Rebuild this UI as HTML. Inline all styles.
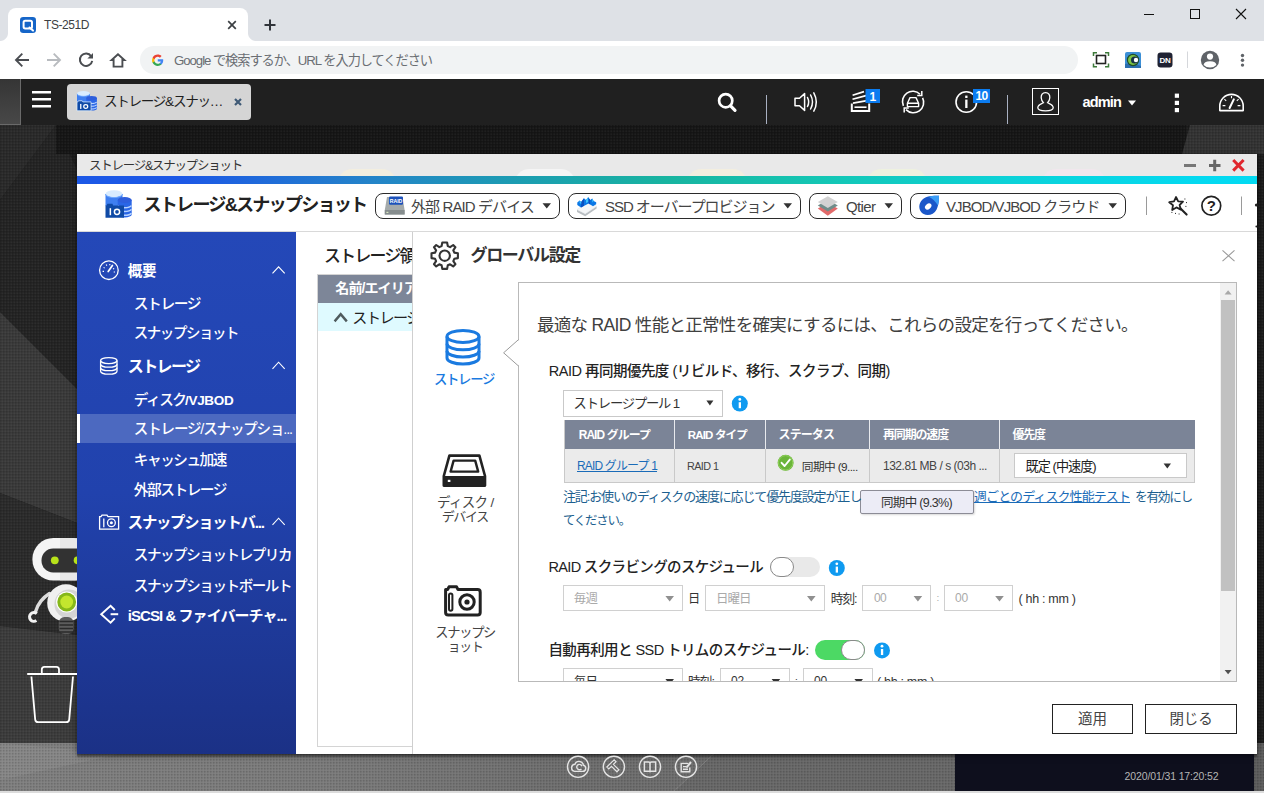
<!DOCTYPE html>
<html lang="ja">
<head>
<meta charset="utf-8">
<title>TS-251D</title>
<style>
*{box-sizing:border-box;margin:0;padding:0}
html,body{width:1264px;height:793px;overflow:hidden;background:#222}
body{position:relative;font-family:"Liberation Sans","Noto Sans CJK JP",sans-serif;color:#222;font-size:14px}
.abs{position:absolute}
svg{display:block;position:absolute;overflow:visible}
.nw{white-space:nowrap}

/* ---------- browser chrome ---------- */
#tabstrip{left:0;top:0;width:1264px;height:41px;background:#dee1e6}
#tab{left:8px;top:8px;width:240px;height:34px;background:#fff;border-radius:8px 8px 0 0}
#tab:before,#tab:after{content:"";position:absolute;bottom:1px;width:8px;height:8px;background:radial-gradient(circle at 0 0,rgba(255,255,255,0) 7.5px,#fff 8.5px)}
#tab:before{left:-8px}
#tab:after{right:-8px;background:radial-gradient(circle at 100% 0,rgba(255,255,255,0) 7.5px,#fff 8.5px)}
#tabtitle{left:44px;top:18px;font-size:12px;color:#3c4043;line-height:14px}
#toolbar{left:0;top:41px;width:1264px;height:38px;background:#fff}
#omni{left:140px;top:46px;width:938px;height:28px;border-radius:14px;background:#f1f3f4}
#omnitext{left:174px;top:51px;font-size:14px;line-height:18px;color:#6b6f73}

/* ---------- QTS top bar ---------- */
#qbar{left:0;top:79px;width:1264px;height:46px;background:#202020}
#qbarL{left:0;top:79px;width:21px;height:46px;background:linear-gradient(#353535,#484848);border-right:1px solid #6a6a6a;border-bottom:1px solid #6a6a6a}
#qtab{left:67px;top:84px;width:184px;height:36px;border-radius:4px;background:#d5d5d5}
#qtabtext{left:104px;top:92px;font-size:14px;line-height:20px;color:#222}
.qsep{width:1px;background:#a9b1c2;top:95px;height:29px}
#admin{left:1082px;top:92px;font-size:15px;line-height:20px;color:#fff;font-weight:bold;letter-spacing:-0.2px}

/* ---------- desktop ---------- */
#desk{left:0;top:125px;width:1264px;height:668px;background:#1d1d1d;overflow:hidden}
#datebox{left:955px;top:754px;width:299px;height:37px;background:#0e0f1d}
#date{left:1124px;top:770px;font-size:10.5px;line-height:14px;color:#b9b9b9}

/* ---------- app window ---------- */
#win{left:77px;top:154px;width:1180px;height:600px;background:#fff;box-shadow:0 1px 6px rgba(0,0,0,.5)}
#wtitle{left:0;top:0;width:1180px;height:22px;background:#e9e9e9}
#wtitletext{left:12px;top:3px;font-size:13px;line-height:18px;color:#333}
#wgrad{left:0;top:22px;width:1180px;height:8px;background:linear-gradient(90deg,#1c58e6 0%,#1c58e6 9%,#2484c8 25%,#1c9cb2 37%,#18b4a0 50%,#14c6b4 63%,#0cd2d8 79%,#04d9f0 95%,#02daf2 100%)}
#wtool{left:0;top:30px;width:1180px;height:48px;background:#fff;border-bottom:1px solid #d9d9d9}
#apptitle{left:65px;top:39px;font-size:19px;line-height:26px;color:#222;font-weight:bold;letter-spacing:-0.3px}
.pill{top:39px;height:26px;border:1px solid #333;border-radius:8px;background:#fff;font-size:15px;line-height:24px;color:#333}
.pill span{position:absolute;top:0;white-space:nowrap}
.pill i{position:absolute;top:10px;width:0;height:0;border-left:4px solid transparent;border-right:4px solid transparent;border-top:6px solid #333}

/* sidebar */
#side{left:0;top:78px;width:219px;height:522px;background:linear-gradient(#2448b8 0%,#2142ad 50%,#1b3186 100%)}
.sh{left:51px;font-size:16px;line-height:22px;font-weight:bold;color:#fff;white-space:nowrap;letter-spacing:-0.4px}
.si{left:58px;font-size:15px;line-height:20px;color:#fff;white-space:nowrap;letter-spacing:-0.3px}
#sel{left:0;top:260px;width:219px;height:29px;background:#4a67bf;border-left:3px solid #fff}

/* list behind dialog */
#listtitle{left:247px;top:91px;font-size:19px;line-height:26px;color:#222;white-space:nowrap;width:90px;overflow:hidden}
#listbox{left:240px;top:119px;width:100px;height:474px;border:1px solid #d6d6d6;border-right:0;background:#fff}
#listhead{left:241px;top:120px;width:95px;height:28px;background:#7d8799;color:#fff;font-size:14px;line-height:28px;padding-left:17px;white-space:nowrap;overflow:hidden}
#listrow{left:241px;top:148px;width:95px;height:32px;background:#dffbff;font-size:15px;line-height:32px;white-space:nowrap;overflow:hidden;color:#222}

/* dialog */
#dlg{left:335px;top:78px;width:845px;height:522px;background:#fff;border-left:1px solid #cfcfcf}
#dlgtitle{left:56px;top:11px;font-size:17px;line-height:26px;font-weight:bold;color:#333;white-space:nowrap;letter-spacing:-0.3px}
#panel{left:105px;top:50px;width:720px;height:401px;border:1px solid #bdbdbd;background:#fff;overflow:hidden}
.btn{top:472px;height:30px;border:1px solid #222;background:#fff;font-size:15px;line-height:28px;text-align:center;color:#333}
.navl{font-size:13px;line-height:14px;color:#333;text-align:center;width:90px;left:7px}

.pillb{top:193px;height:26px;border:1px solid #2b2b2b;border-radius:8px;background:#fff}
.vs{top:420px;width:1px;height:29px;background:#e8eaee}
.vh{top:449px;width:1px;height:33px;background:#c9c9c9}
.tog{width:50px;height:20px;border-radius:10px}
.knob{width:24px;height:20px;border-radius:10px;background:#fff;border:1.5px solid #8a8a8a}
.selb{height:26px;border:1px solid #d0d0d0;background:#fff}
</style>
</head>
<body>

<!-- ======= Browser chrome ======= -->
<div id="tabstrip" class="abs"></div>
<div id="tab" class="abs"></div>
<div id="toolbar" class="abs"></div>
<div id="omni" class="abs"></div>


<!-- chrome icons -->
<svg class="abs" style="left:0;top:0" width="1264" height="78" viewBox="0 0 1264 78">
  <!-- favicon -->
  <rect x="20" y="17" width="16" height="16" rx="3.2" fill="#1565c8"/>
  <rect x="23.6" y="20.8" width="8.4" height="7.6" rx="1.6" fill="none" stroke="#fff" stroke-width="2"/>
  <path d="M29.5 27.5 L33 30.6" stroke="#fff" stroke-width="2" stroke-linecap="round"/>
  <!-- tab close -->
  <path d="M228.2 21.2 L235.8 28.8 M235.8 21.2 L228.2 28.8" stroke="#3c4043" stroke-width="1.7"/>
  <!-- new tab -->
  <path d="M264.5 25 H275.5 M270 19.5 V30.5" stroke="#30343a" stroke-width="2"/>
  <!-- window controls -->
  <path d="M1144 14.5 H1154" stroke="#111" stroke-width="1"/>
  <rect x="1190.5" y="9.5" width="9" height="9" fill="none" stroke="#111" stroke-width="1"/>
  <path d="M1236 9 L1246 19 M1246 9 L1236 19" stroke="#111" stroke-width="1.1"/>
  <!-- back -->
  <path d="M29 60 H16.5 M22.3 53.7 L16 60 L22.3 66.3" fill="none" stroke="#4a4d51" stroke-width="1.9"/>
  <!-- forward -->
  <path d="M47 60 H59.5 M53.7 53.7 L60 60 L53.7 66.3" fill="none" stroke="#b8bbbf" stroke-width="1.9"/>
  <!-- reload -->
  <path d="M91.2 56.2 A6.2 6.2 0 1 0 92.2 60.8" fill="none" stroke="#4a4d51" stroke-width="2"/>
  <path d="M93 53 V58.6 H87.4 Z" fill="#4a4d51"/>
  <!-- home -->
  <path d="M118 54.2 L111.6 60 H113.6 V66.6 H122.4 V60 H124.4 Z" fill="none" stroke="#4a4d51" stroke-width="1.9" stroke-linejoin="miter"/>
  <!-- Google G -->
  <g transform="translate(151.5,54) scale(0.26)">
    <path fill="#4285F4" d="M45.12 24.5c0-1.56-.14-3.06-.4-4.5H24v8.51h11.84c-.51 2.75-2.06 5.08-4.39 6.64v5.52h7.11c4.16-3.83 6.56-9.47 6.56-16.17z"/>
    <path fill="#34A853" d="M24 46c5.94 0 10.92-1.97 14.56-5.33l-7.11-5.52c-1.97 1.32-4.49 2.1-7.45 2.1-5.73 0-10.58-3.87-12.31-9.07H4.34v5.7C7.96 41.07 15.4 46 24 46z"/>
    <path fill="#FBBC05" d="M11.69 28.18C11.25 26.86 11 25.45 11 24s.25-2.86.69-4.18v-5.7H4.34C2.85 17.09 2 20.45 2 24c0 3.55.85 6.91 2.34 9.88l7.35-5.7z"/>
    <path fill="#EA4335" d="M24 10.75c3.23 0 6.13 1.11 8.41 3.29l6.31-6.31C34.91 4.18 29.93 2 24 2 15.4 2 7.96 6.93 4.34 14.12l7.35 5.7c1.73-5.2 6.58-9.07 12.31-9.07z"/>
  </g>
  <!-- screenshot ext -->
  <rect x="1096.5" y="55.5" width="9" height="8" fill="none" stroke="#222" stroke-width="1.6"/>
  <path d="M1093.5 56 V52.7 H1097 M1105 52.7 H1108.5 V56 M1093.5 63.5 V66.7 H1097 M1105 66.7 H1108.5 V63.5" fill="none" stroke="#3d7a3a" stroke-width="1.5"/>
  <!-- ext 2 -->
  <rect x="1125" y="52" width="16" height="16" rx="2" fill="#3c8fd6"/>
  <path d="M1125 64 Q1133 62 1141 66 V68 H1125 Z" fill="#2b6fb0"/>
  <circle cx="1133" cy="60" r="6.2" fill="#1e4d2b"/>
  <circle cx="1133" cy="60" r="5" fill="#7cc243"/>
  <circle cx="1134.6" cy="60" r="3.6" fill="#16324a"/>
  <circle cx="1136" cy="60" r="2.2" fill="#fff"/>
  <!-- DN -->
  <rect x="1157.5" y="52.5" width="15" height="15" rx="3.2" fill="#1f2233"/>
  <text x="1165" y="63.2" font-family="Liberation Sans, sans-serif" font-size="8" font-weight="bold" fill="#fff" text-anchor="middle" letter-spacing="-0.3">DN</text>
  <!-- divider -->
  <path d="M1187.5 51.5 V68" stroke="#d5d7db" stroke-width="1"/>
  <!-- profile -->
  <circle cx="1210" cy="60" r="9.2" fill="#5f6368"/>
  <circle cx="1210" cy="56.6" r="3.1" fill="#fff"/>
  <path d="M1203.6 65.1 Q1203.8 61.4 1210 61.2 Q1216.2 61.4 1216.4 65.1 Q1213.8 67.6 1210 67.6 Q1206.2 67.6 1203.6 65.1 Z" fill="#fff"/>
  <!-- menu -->
  <circle cx="1242.5" cy="55.5" r="1.7" fill="#5f6368"/><circle cx="1242.5" cy="60.3" r="1.7" fill="#5f6368"/><circle cx="1242.5" cy="65.1" r="1.7" fill="#5f6368"/>
</svg>

<!-- ======= QTS bar ======= -->
<div id="qbar" class="abs"></div>
<div id="qbarL" class="abs"></div>
<div id="qtab" class="abs"></div>
<div class="abs qsep" style="left:766px"></div>
<div class="abs qsep" style="left:1007px"></div>


<svg class="abs" style="left:0;top:78px" width="1264" height="47" viewBox="0 78 1264 47">
  <!-- hamburger -->
  <path d="M32 92.2 H51 M32 99.2 H51 M32 106.2 H51" stroke="#fff" stroke-width="2.4"/>
  <!-- storage icon in tab -->
  <g transform="translate(77 90.9) scale(0.76 0.715) translate(-105.5 -190)">
    <path d="M105.5 194 V206 H122.5 V194 Z" fill="#3f7ff0"/>
    <ellipse cx="114" cy="193.8" rx="8.5" ry="3.6" fill="#d9ecff"/>
    <path d="M105.5 194 A8.5 3.6 0 0 0 122.5 194" fill="none" stroke="#6fa8ff" stroke-width="1"/>
    <path d="M117.7 200 V214.5 A7 3 0 0 0 131.7 214.5 V200 Z" fill="#2a66e6"/>
    <ellipse cx="124.7" cy="200" rx="7" ry="3" fill="#2e5edc"/>
    <path d="M118 205.6 A7 3 0 0 0 131.4 205.6 M118 209.4 A7 3 0 0 0 131.4 209.4 M118 213.2 A7 3 0 0 0 131.4 213.2" fill="none" stroke="#b7d3ff" stroke-width="1.5"/>
    <path d="M105.5 205.4 H106.6 L107.4 203.8 H112.4 L113.2 205.4 H124 V217.8 H105.5 Z" fill="#0f4aa6" stroke="#dff0ff" stroke-width="1"/>
    <rect x="109.6" y="208.2" width="1.7" height="7" fill="#fff"/>
    <circle cx="117" cy="211.8" r="2.6" fill="none" stroke="#fff" stroke-width="1.7"/>
  </g>
  <!-- tab close -->
  <path d="M235 99 L241 105 M241 99 L235 105" stroke="#3f5a76" stroke-width="2.2"/>
  <!-- search -->
  <circle cx="725.7" cy="100.7" r="6.6" fill="none" stroke="#fff" stroke-width="2.7"/>
  <path d="M730.6 105.8 L735 110.4" stroke="#fff" stroke-width="3.2" stroke-linecap="round"/>
  <!-- volume -->
  <path d="M795 98.2 H799.5 L804.6 93.6 V110.4 L799.5 105.8 H795 Z" fill="none" stroke="#fff" stroke-width="1.5" stroke-linejoin="round"/>
  <path d="M807.5 97.5 Q809.8 102 807.5 106.5 M810.6 95 Q814.4 102 810.6 109 M813.8 92.8 Q818.8 102 813.8 111.2" fill="none" stroke="#fff" stroke-width="1.5" stroke-linecap="round"/>
  <!-- tasks -->
  <path d="M851.8 103.5 V111 H869.2 V103.5" fill="none" stroke="#fff" stroke-width="2"/>
  <path d="M854.5 107.2 H866.5" stroke="#fff" stroke-width="1.6"/>
  <path d="M853 103.2 L867 100.6 M852.5 99.2 L866 95.6 M852.6 95.2 L864 91.6" stroke="#fff" stroke-width="1.7"/>
  <rect x="865.5" y="89" width="14.5" height="14" fill="#0b7cf0"/>
  <text x="872.8" y="100.6" font-family="Liberation Sans, sans-serif" font-size="12" font-weight="bold" fill="#fff" text-anchor="middle">1</text>
  <!-- sync / backup -->
  <path d="M903.4 105.8 A10.3 10.3 0 0 1 920 94.2" fill="none" stroke="#fff" stroke-width="1.6"/>
  <path d="M922.6 97.8 A10.3 10.3 0 0 1 906 109.6" fill="none" stroke="#fff" stroke-width="1.6"/>
  <path d="M921.8 91 V95.6 H917.2" fill="none" stroke="#fff" stroke-width="1.5"/>
  <path d="M904.2 112.6 V108 H908.8" fill="none" stroke="#fff" stroke-width="1.5"/>
  <path d="M910 97.6 H916 L918.6 103.2 V106.6 H907.4 V103.2 Z M907.4 103.2 H918.6" fill="none" stroke="#fff" stroke-width="1.4" stroke-linejoin="round"/>
  <!-- info -->
  <circle cx="966.3" cy="102" r="10.3" fill="none" stroke="#fff" stroke-width="1.6"/>
  <rect x="965.2" y="99.6" width="2.3" height="8.4" fill="#fff"/><rect x="965.2" y="95.6" width="2.3" height="2.4" fill="#fff"/>
  <rect x="973" y="89" width="17" height="14" fill="#0b7cf0"/>
  <text x="981.5" y="100.4" font-family="Liberation Sans, sans-serif" font-size="12" font-weight="bold" fill="#fff" text-anchor="middle" letter-spacing="-0.6">10</text>
  <!-- user -->
  <rect x="1032.5" y="88.5" width="26" height="26" fill="none" stroke="#fff" stroke-width="1"/>
  <path d="M1045.5 92.6 C1042.4 92.6 1041 95 1041.2 97.8 C1041.4 100.6 1042.6 102 1043.4 102.8 C1041.4 104 1037.8 104.4 1037.8 107.8 C1037.8 110.4 1041 110.8 1045.5 110.8 C1050 110.8 1053.2 110.4 1053.2 107.8 C1053.2 104.4 1049.6 104 1047.6 102.8 C1048.4 102 1049.6 100.6 1049.8 97.8 C1050 95 1048.6 92.6 1045.5 92.6 Z" fill="none" stroke="#fff" stroke-width="1.3"/>
  <path d="M1128 100.6 H1136 L1132 105.6 Z" fill="#fff"/>
  <!-- more dots -->
  <rect x="1174.8" y="93.6" width="4.2" height="4.2" fill="#fff"/><rect x="1174.8" y="100.8" width="4.2" height="4.2" fill="#fff"/><rect x="1174.8" y="108" width="4.2" height="4.2" fill="#fff"/>
  <!-- gauge -->
  <path d="M1219.8 110.6 V106 A11.7 11.7 0 0 1 1243.2 106 V110.6 Z" fill="none" stroke="#fff" stroke-width="1.6" stroke-linejoin="round"/>
  <path d="M1229.6 108 L1233.8 99.4" stroke="#fff" stroke-width="2" stroke-linecap="round"/>
  <path d="M1222.6 105.6 H1225.4 M1237.6 105.6 H1240.4 M1224.4 99.2 L1226.2 100.8 M1238.6 99.2 L1236.8 100.8 M1231.5 96 V98.2" stroke="#fff" stroke-width="1.1"/>
</svg>

<!-- ======= Desktop ======= -->
<div id="desk" class="abs">
<svg width="1264" height="668" viewBox="0 125 1264 668" style="left:0;top:0">
  <defs>
    <pattern id="dots" width="3" height="3" patternUnits="userSpaceOnUse">
      <rect x="0" y="0" width="1.5" height="1.5" fill="#000" opacity=".14"/>
      <rect x="1.5" y="1.5" width="1.5" height="1.5" fill="#fff" opacity=".04"/>
    </pattern>
    <linearGradient id="bg2" x1="0" y1="0" x2="1" y2="0"><stop offset="0" stop-color="#7f7f7f"/><stop offset=".25" stop-color="#7b7b7b"/><stop offset=".45" stop-color="#6e6e6e"/><stop offset="1" stop-color="#6a6a6a"/></linearGradient>
    <linearGradient id="sh" x1="0" y1="0" x2="0" y2="1"><stop offset="0" stop-color="#000" stop-opacity=".45"/><stop offset="1" stop-color="#000" stop-opacity="0"/></linearGradient>
    <linearGradient id="dg1" x1="0" y1="0" x2="0" y2="1"><stop offset="0" stop-color="#151515"/><stop offset="1" stop-color="#222"/></linearGradient>
  </defs>
  <rect x="0" y="125" width="1264" height="668" fill="#1b1b1b"/>
  <!-- top-left lighter wedge -->
  <polygon points="0,125 56,125 0,200" fill="#2a2a2a"/>
  <polygon points="0,200 56,125 77,170 77,389 0,312" fill="#242424"/>
  <polygon points="0,312 77,389 77,523 0,493" fill="#3a3a3a"/>
  <polygon points="0,493 77,523 77,635 0,626" fill="#2b2b2b"/>
  <polygon points="0,626 77,635 77,743 0,743" fill="#3c3c3c"/>
  <!-- top strip -->
  <rect x="56" y="125" width="1130" height="29" fill="#161616"/>
  <polygon points="1190,125 1264,125 1264,793 1257,793 1257,154 1182,154" fill="#333"/>
  <rect x="1257" y="154" width="7" height="600" fill="#1c1c1c"/>
  <!-- bottom strip -->
  <rect x="0" y="743" width="1264" height="50" fill="url(#bg2)"/>
  <polygon points="0,780 120,754 0,743" fill="#868686"/>
  <polygon points="672,793 720,748 955,748 955,793" fill="#686868"/>
  <path d="M672 793 L720 748" stroke="#808080" stroke-width="1"/>
  <rect x="1254" y="743" width="10" height="50" fill="#5c5c5c"/>
  <rect x="77" y="754" width="1180" height="4" fill="url(#sh)"/>
  <rect x="0" y="125" width="1264" height="668" fill="url(#dots)"/>
  <rect x="0" y="791" width="1264" height="2" fill="#dcdcdc"/>
</svg>
</div>
<div id="datebox" class="abs"></div>

<!-- ======= App window ======= -->
<div id="win" class="abs">
  <div id="wtitle" class="abs"></div>
  <div id="wgrad" class="abs"></div>
  <div id="wtool" class="abs"></div>

  <div id="side" class="abs"></div>


  <div id="dlg" class="abs">
  </div>
</div>

<!-- ======= generated layer (page coordinates) ======= -->
<div id="gen" class="abs" style="left:0;top:0;width:1264px;height:793px">

<!-- desktop robot + trash (clipped by window edge) -->
<svg width="77" height="793" viewBox="0 0 77 793" style="left:0;top:0;overflow:hidden">
  <!-- robot -->
  <path d="M49.5 593.5 Q39 600 35.6 611.5" fill="none" stroke="#dcdcdc" stroke-width="3.4" stroke-linecap="round"/>
  <path d="M36.4 620.6 A4.4 4.4 0 1 1 36.8 613.6" fill="none" stroke="#f2f2f2" stroke-width="3"/>
  <circle cx="66" cy="603" r="18.8" fill="#f0f0f0"/>
  <circle cx="69" cy="604" r="14.6" fill="#d4d4d4"/>
  <circle cx="66.7" cy="602" r="10.6" fill="#fff"/>
  <circle cx="66.7" cy="602" r="9.4" fill="#86b81a"/>
  <circle cx="66.7" cy="602" r="6.4" fill="#c3e62e"/>
  <rect x="58.8" y="617" width="14.8" height="17" rx="5.6" fill="#5c5c5c"/>
  <path d="M59.5 621.5 H73 M59.5 625 H73 M59.5 628.5 H73 M59.5 632 H73" stroke="#2a2a2a" stroke-width="1.3"/>
  <rect x="32.4" y="538" width="62" height="42.6" rx="21" fill="#f4f4f4"/>
  <rect x="60" y="538" width="17" height="42.6" fill="#dedede" opacity=".55"/>
  <rect x="41.5" y="548.6" width="52" height="23.8" rx="11.6" fill="#323232"/>
  <circle cx="54.8" cy="560.3" r="3.9" fill="#b8e21a"/>
  <circle cx="77.6" cy="560.3" r="3.9" fill="#b8e21a"/>
  <!-- trash -->
  <path d="M31.4 676.5 L35.2 719.6 Q35.5 722.2 38.2 722.2 H66.2 Q68.9 722.2 69.2 719.6 L73 676.5" fill="none" stroke="#fff" stroke-width="1.8"/>
  <path d="M28 674 H76.5" stroke="#fff" stroke-width="2.2" stroke-linecap="round"/>
  <path d="M41.8 673.6 V669.4 Q41.8 666.8 44.4 666.8 H56.4 Q59 666.8 59 669.4 V673.6" fill="none" stroke="#fff" stroke-width="1.8"/>
</svg>

<!-- faint desktop icons showing through translucent title bar -->
<svg width="1180" height="22" viewBox="77 154 1180 22" style="left:77px;top:154px;overflow:hidden">
  <rect x="338" y="169" width="58" height="30" rx="14" fill="#f5efdc" opacity=".8"/>
  <rect x="515" y="169" width="60" height="30" rx="14" fill="#f7f7f7" opacity=".85"/>
  <rect x="687" y="169" width="60" height="30" rx="14" fill="#f5efdc" opacity=".8"/>
  <rect x="867" y="169" width="60" height="30" rx="14" fill="#eff3dc" opacity=".8"/>
  <rect x="1042" y="169" width="64" height="30" rx="14" fill="#f3e6ee" opacity=".8"/>
</svg>
<!-- boxes -->
<div class="abs" style="left:77px;top:414px;width:219px;height:29px;background:#4c69c0;border-left:3px solid #fff"></div>
<div class="abs pillb" style="left:375px;width:185px"></div>
<div class="abs pillb" style="left:568px;width:233px"></div>
<div class="abs pillb" style="left:809px;width:93px"></div>
<div class="abs pillb" style="left:910px;width:216px"></div>

<!-- list behind dialog -->
<div class="abs" style="left:317px;top:274px;width:95px;height:473px;border:1px solid #d4d4d4;border-right:0;background:#fff"></div>
<div class="abs" style="left:318px;top:275px;width:94px;height:28px;background:#7d8698"></div>
<div class="abs" style="left:318px;top:303px;width:94px;height:28px;background:#dffaff"></div>

<!-- dialog: panel etc -->
<div class="abs" style="left:518px;top:282px;width:719px;height:400px;border:1px solid #b9b9b9;background:#fff"></div>
<!-- scrollbar -->
<div class="abs" style="left:1220px;top:283px;width:16px;height:398px;background:#f1f1f1"></div>
<div class="abs" style="left:1221px;top:300px;width:14px;height:291px;background:#c1c1c1"></div>
<!-- select pool -->
<div class="abs" style="left:563px;top:390px;width:160px;height:27px;border:1px solid #c9c9c9;background:#fff"></div>
<!-- table -->
<div class="abs" style="left:564px;top:420px;width:631px;height:63px;background:#ebebeb;border:1px solid #c9c9c9;border-top:0"></div>
<div class="abs" style="left:565px;top:420px;width:630px;height:29px;background:#7b8497"></div>
<div class="abs vs" style="left:674px"></div><div class="abs vs" style="left:765px"></div><div class="abs vs" style="left:869px"></div><div class="abs vs" style="left:999px"></div>
<div class="abs vh" style="left:674px"></div><div class="abs vh" style="left:765px"></div><div class="abs vh" style="left:869px"></div><div class="abs vh" style="left:999px"></div>
<div class="abs" style="left:1014px;top:453px;width:173px;height:25px;border:1px solid #c9c9c9;background:#fff"></div>
<!-- tooltip -->
<div class="abs" style="left:860px;top:490px;width:114px;height:24px;border:1px solid #8c8c96;background:#ececf6;border-radius:2px;box-shadow:1px 1px 2px rgba(0,0,0,.15)"></div>
<!-- scrub row -->
<div class="abs tog" style="left:770px;top:557px;background:#e9e9e9"></div>
<div class="abs knob" style="left:770px;top:557px"></div>
<div class="abs selb" style="left:563px;top:585px;width:120px"></div>
<div class="abs selb" style="left:705px;top:585px;width:120px"></div>
<div class="abs selb" style="left:862px;top:585px;width:69px"></div>
<div class="abs selb" style="left:944px;top:585px;width:69px"></div>
<!-- trim row -->
<div class="abs tog" style="left:815px;top:640px;background:#4cd964"></div>
<div class="abs knob" style="left:841px;top:640px"></div>
<div class="abs selb" style="left:563px;top:668px;width:120px"></div>
<div class="abs selb" style="left:720px;top:668px;width:70px"></div>
<div class="abs selb" style="left:803px;top:668px;width:70px"></div>
<!-- buttons -->
<div class="abs" style="left:1052px;top:704px;width:81px;height:30px;border:1px solid #222;background:#fff"></div>
<div class="abs" style="left:1145px;top:704px;width:92px;height:30px;border:1px solid #222;background:#fff"></div>

<!--ICONS_START-->
<svg width="1264" height="793" viewBox="0 0 1264 793" style="left:0;top:0">
  <!-- window controls -->
  <path d="M1184 165.5 H1196" stroke="#777" stroke-width="3"/>
  <path d="M1209 165.5 H1220.5 M1214.7 159.8 V171.2" stroke="#666" stroke-width="3"/>
  <path d="M1233.2 160 L1243.6 170.6 M1243.6 160 L1233.2 170.6" stroke="#e0262d" stroke-width="3"/>

  <!-- app icon -->
  <g>
    <path d="M105.5 194 V206 H122.5 V194 Z" fill="#3f7ff0"/>
    <ellipse cx="114" cy="193.8" rx="8.5" ry="3.6" fill="#d9ecff"/>
    <path d="M105.5 194 A8.5 3.6 0 0 0 122.5 194" fill="none" stroke="#6fa8ff" stroke-width="1"/>
    <path d="M117.7 200 V214.5 A7 3 0 0 0 131.7 214.5 V200 Z" fill="#2a66e6"/>
    <ellipse cx="124.7" cy="200" rx="7" ry="3" fill="#2e5edc"/>
    <path d="M118 205.6 A7 3 0 0 0 131.4 205.6 M118 209.4 A7 3 0 0 0 131.4 209.4 M118 213.2 A7 3 0 0 0 131.4 213.2" fill="none" stroke="#b7d3ff" stroke-width="1.5"/>
    <path d="M105.5 205.4 H106.6 L107.4 203.8 H112.4 L113.2 205.4 H124 V217.8 H105.5 Z" fill="#0f4aa6"/>
    <rect x="109.6" y="208.2" width="1.5" height="7" fill="#fff"/>
    <circle cx="117" cy="211.8" r="2.6" fill="none" stroke="#fff" stroke-width="1.5"/>
  </g>

  <!-- pill carets -->
  <path d="M542.5 203.2 H551 L546.75 208.4 Z M783.5 203.2 H792 L787.75 208.4 Z M884.5 203.2 H893 L888.75 208.4 Z M1108.5 203.2 H1117 L1112.75 208.4 Z" fill="#333"/>
  <!-- pill icon 1 : RAID drive -->
  <path d="M387 197 H402.5 L404.6 210 V214.5 H384.8 V210 Z" fill="#a4aaab"/>
  <rect x="384.8" y="210" width="19.8" height="4.5" fill="#868d8e"/>
  <rect x="386.4" y="211.8" width="2" height="1.2" fill="#d8e6c0"/>
  <rect x="389" y="196.4" width="14" height="8.4" rx="1.2" fill="#1c52bb"/>
  <text x="396" y="202.6" font-family="Liberation Sans, sans-serif" font-size="5.2" font-weight="bold" fill="#fff" text-anchor="middle">RAID</text>
  <!-- pill icon 2 : SSD chip -->
  <path d="M577 209.6 L585.2 213.8 L596.6 206.2 V208.6 L585.2 216.2 L577 212 Z" fill="#b9bec2"/>
  <path d="M577 209.6 L588.4 202 L596.6 206.2 L585.2 213.8 Z" fill="#f4f6f8" stroke="#dfe3e6" stroke-width=".5"/>
  <path d="M577.3 202.4 L579.6 200.4 L581.2 202 L584 198.2 L586 200 L588.2 197.3 L590.2 200 L592.2 198.6 L593.6 201 L596.2 202.2 V204.2 L593 206.2 L588.6 203.6 L581 207.6 L577.3 205 Z" fill="#0b78e6"/>
  <path d="M581.2 202 L584 198.2 V205.8 L581 207.6 Z M588.2 197.3 L590.2 200 V204.4 L588.6 203.6 Z" fill="#0a4fc0"/>
  <path d="M579.6 200.4 L581.2 202 V204 L579.6 203 Z M586 200 L588.2 197.3 V202 L586 203 Z M592.2 198.6 L593.6 201 L592.2 202.4 Z" fill="#39c2ff"/>
  <!-- pill icon 3 : Qtier layers -->
  <path d="M817.8 208.6 L827.8 203 L837.8 208.6 L827.8 215.8 Z" fill="#e26a6a"/>
  <path d="M817.8 205.4 L827.8 199.8 L837.8 205.4 L827.8 211.4 Z" fill="#6f8d8a"/>
  <path d="M817.8 202 L827.8 196.2 L837.8 202 L827.8 208 Z" fill="#d2d2d2"/>
  <!-- pill icon 4 : VJBOD -->
  <path d="M939 195.8 C939 195.8 939.4 204 936.6 209.4 C934 214.4 928 216.4 923.6 214 C919 211.4 918 205.6 921 201.2 C924.4 196.2 931 195.6 939 195.8 Z" fill="#1b57c9"/>
  <path d="M939 195.8 C939 195.8 939.3 201 938 205.6 C935.6 201.4 932.4 198.4 928.6 196.8 C931.6 195.8 935.2 195.7 939 195.8 Z" fill="#3a9df6"/>
  <ellipse cx="928.2" cy="206.4" rx="3.6" ry="2.6" transform="rotate(-40 928.2 206.4)" fill="#fff"/>

  <!-- toolbar right -->
  <path d="M1146.5 196.5 V215 M1241.5 196.5 V215" stroke="#9a9a9a" stroke-width="1"/>
  <!-- wand -->
  <path d="M1176 197 L1178.2 201.4 L1183 201.6 L1179.6 205 L1180.8 209.6 L1176.4 207.4 L1172.2 210 L1173 205.2 L1169.2 202.2 L1174 201.4 Z" fill="none" stroke="#222" stroke-width="1.8" stroke-linejoin="round"/>
  <path d="M1180.5 208.4 L1186.6 214.6" stroke="#222" stroke-width="2.1" stroke-linecap="round"/>
  <path d="M1184.4 199 h1 M1186 202.6 h1 M1185.4 206.4 h1 M1171.4 212.4 h1 M1175 213.4 h1 M1178.6 214 h1" stroke="#222" stroke-width="1"/>
  <!-- help -->
  <circle cx="1211.3" cy="205.8" r="9.4" fill="none" stroke="#222" stroke-width="1.7"/>
  <text x="1211.3" y="211.2" font-family="Liberation Sans, sans-serif" font-size="15" font-weight="bold" fill="#222" text-anchor="middle">?</text>
  <circle cx="1256.4" cy="205" r="1.5" fill="#222"/><circle cx="1256.4" cy="226.6" r="1" fill="#222"/>

  <!-- sidebar: overview gauge -->
  <circle cx="108.9" cy="270.2" r="9.3" fill="none" stroke="#fff" stroke-width="1.3"/>
  <path d="M108.2 271.6 L112.4 265.4" stroke="#fff" stroke-width="1.7" stroke-linecap="round"/>
  <path d="M102.6 271.4 h1.4 M103.6 267.4 l1.1 .7 M106.2 264.6 l.6 1.2 M109.8 264 v1.3 M114.2 268.6 l-1.2 .5 M115 272 h-1.3" stroke="#fff" stroke-width="1.1"/>
  <!-- chevrons -->
  <path d="M272.5 273.4 L278.6 266.8 L284.7 273.4 M272.5 368.8 L278.6 362.2 L284.7 368.8 M272.5 524.8 L278.6 518.2 L284.7 524.8" fill="none" stroke="#fff" stroke-width="1.1"/>
  <!-- storage db -->
  <g fill="none" stroke="#fff" stroke-width="1.3">
    <ellipse cx="108.8" cy="360.6" rx="8.2" ry="3"/>
    <path d="M100.6 360.6 V371.2 A8.2 3 0 0 0 117 371.2 V360.6"/>
    <path d="M100.6 364.2 A8.2 3 0 0 0 117 364.2 M100.6 367.7 A8.2 3 0 0 0 117 367.7"/>
  </g>
  <!-- snapshot -->
  <g fill="none" stroke="#fff" stroke-width="1.3">
    <path d="M99.6 516.6 H101 L102 515.2 H107 L108 516.6 H118.6 V529.2 H99.6 Z"/>
    <path d="M103.8 518.6 V527.2"/>
    <circle cx="111.4" cy="522.8" r="3.9"/>
  </g>
  <circle cx="111.4" cy="522.8" r="1.5" fill="#fff"/>
  <!-- iscsi -->
  <path d="M114.8 610 L110.6 605.8 L101.2 614.2 L110.6 622.6 L114.8 618.4" fill="none" stroke="#fff" stroke-width="1.9" stroke-linejoin="miter"/>
  <path d="M110.6 614.2 H118.2" stroke="#fff" stroke-width="2"/>

  <!-- list row chevron -->
  <path d="M334.6 321.4 L340.7 314.2 L346.8 321.4" fill="none" stroke="#4f5b5e" stroke-width="2.4"/>

  <!-- dialog gear -->
  <g transform="translate(444.7 255.7)" fill="none" stroke="#333" stroke-width="2.1" stroke-linejoin="round">
    <path d="M-2.4 -13.2 H2.4 L3.1 -9.6 L5.4 -8.6 L8.5 -10.7 L10.7 -8.5 L8.6 -5.4 L9.6 -3.1 L13.2 -2.4 V2.4 L9.6 3.1 L8.6 5.4 L10.7 8.5 L8.5 10.7 L5.4 8.6 L3.1 9.6 L2.4 13.2 H-2.4 L-3.1 9.6 L-5.4 8.6 L-8.5 10.7 L-10.7 8.5 L-8.6 5.4 L-9.6 3.1 L-13.2 2.4 V-2.4 L-9.6 -3.1 L-8.6 -5.4 L-10.7 -8.5 L-8.5 -10.7 L-5.4 -8.6 L-3.1 -9.6 Z"/>
    <circle r="5.2"/>
  </g>
  <!-- dialog close -->
  <path d="M1222.5 250.4 L1234.5 261.2 M1234.5 250.4 L1222.5 261.2" stroke="#9a9a9a" stroke-width="1.1"/>
  <!-- pointer -->
  <path d="M519.5 339.6 L503.6 352.8 L519.5 366 Z" fill="#fff"/>
  <path d="M518.5 339.6 L503.6 352.8 L518.5 366" fill="none" stroke="#9a9a9a" stroke-width="1"/>

  <!-- nav: storage (blue) -->
  <g fill="none" stroke="#1a7ae0" stroke-width="3">
    <ellipse cx="463" cy="336.4" rx="16" ry="6"/>
    <path d="M447 336.4 V358 A16 6 0 0 0 479 358 V336.4"/>
    <path d="M447 343.8 A16 6 0 0 0 479 343.8 M447 351 A16 6 0 0 0 479 351"/>
  </g>
  <!-- nav: disk -->
  <path d="M449.4 455.6 H479.4 L485 476 V485.6 H443.8 V476 Z" fill="none" stroke="#222" stroke-width="2.6" stroke-linejoin="round"/>
  <path d="M453.6 460.6 H475.2 L478.2 471.6 H450.6 Z" fill="none" stroke="#222" stroke-width="2.4" stroke-linejoin="round"/>
  <rect x="443.8" y="476" width="41.2" height="9.6" fill="#222"/>
  <rect x="447.8" y="479.8" width="2.6" height="2.2" fill="#fff"/>
  <!-- nav: snapshot -->
  <g fill="none" stroke="#222" stroke-width="3" stroke-linejoin="round">
    <path d="M445.6 589.6 H447.6 L449 586.8 H456.6 L458 589.6 H477.6 Q480.2 589.6 480.2 592.2 V612.4 Q480.2 615 477.6 615 H448.2 Q445.6 615 445.6 612.4 Z"/>
    <rect x="449" y="593.4" width="3.4" height="17.4" rx="1.7" stroke-width="2"/>
    <circle cx="467" cy="602" r="7.2"/>
  </g>
  <circle cx="467" cy="602" r="2.6" fill="#222"/>

  <!-- select carets -->
  <path d="M706.4 400.6 H713.4 L709.9 405.6 Z" fill="#333"/>
  <path d="M1163.6 463.4 H1171 L1167.3 468.4 Z" fill="#333"/>
  <path d="M665.4 596 H674 L669.7 601.4 Z M807 596 H815.6 L811.3 601.4 Z M913.6 596 H922.2 L917.9 601.4 Z M995.2 596 H1003.8 L999.5 601.4 Z" fill="#909090"/>
  <path d="M665.4 679 H674 L669.7 684.4 Z M771.6 679 H780.2 L775.9 684.4 Z M854.4 679 H863 L858.7 684.4 Z" fill="#333"/>
  <!-- info icons -->
  <g fill="#0f9af0"><circle cx="739.8" cy="403.6" r="8"/><circle cx="836.8" cy="568" r="8"/><circle cx="882" cy="650.4" r="8"/></g>
  <g fill="#fff">
    <rect x="738.7" y="402.2" width="2.3" height="6"/><circle cx="739.8" cy="399.4" r="1.4"/>
    <rect x="835.7" y="566.6" width="2.3" height="6"/><circle cx="836.8" cy="563.8" r="1.4"/>
    <rect x="880.9" y="649" width="2.3" height="6"/><circle cx="882" cy="646.2" r="1.4"/>
  </g>
  <!-- check -->
  <circle cx="785.6" cy="462.8" r="8" fill="#6bb53a"/>
  <circle cx="785.6" cy="462.8" r="7.2" fill="none" stroke="#8fd05a" stroke-width="1"/>
  <path d="M781.6 462.8 L784.6 466 L789.8 459.6" fill="none" stroke="#fff" stroke-width="1.9" stroke-linecap="round" stroke-linejoin="round"/>
  <!-- scrollbar arrows -->
  <path d="M1224.6 294.4 H1231.6 L1228.1 290.2 Z" fill="#a8a8a8"/>
  <path d="M1224.6 670 H1231.6 L1228.1 674.2 Z" fill="#505050"/>

  <!-- dock icons -->
  <g fill="none" stroke="#e4e4e4" stroke-width="1.4">
    <circle cx="578.1" cy="766.8" r="10.6"/><circle cx="613.9" cy="766.8" r="10.6"/><circle cx="650" cy="766.8" r="10.6"/><circle cx="686" cy="766.8" r="10.6"/>
    <path d="M574.4 771.4 H582.8 A3.1 3.1 0 0 0 583.4 765.3 A4.4 4.4 0 0 0 574.9 764.3 A3.6 3.6 0 0 0 574.4 771.4 Z"/>
    <path d="M581.4 768.9 A2.7 2.7 0 1 1 582 766.2"/>
    <g transform="translate(613.9 766.8) rotate(-45) scale(.86)"><path d="M-6 -5.6 H6 V-2.4 H1.6 V6.6 H-1.6 V-2.4 H-6 Z"/></g>
    <path d="M644.4 762 H648.6 Q650 762 650 763.2 Q650 762 651.4 762 H655.6 V771.2 H651.4 Q650 771.2 650 772.2 Q650 771.2 648.6 771.2 H644.4 Z M650 763.2 V771.6" stroke-width="1.5"/>
    <path d="M688.4 763.4 H681.2 V771.8 H689.8 V767.4 M683 766.6 H686.2 M683 769.2 H688"/>
    <path d="M686.4 767.6 L691 762" stroke-width="2"/>
  </g>
</svg>
<!--ICONS_END-->
</div>

<div id="txt">
<div id="t0" class="abs nw" style="left:44.0px;top:17.0px;font-size:12.00px;line-height:17px;color:#3c4043;letter-spacing:-0.44px;">TS-251D</div>
<div id="t1" class="abs nw" style="left:174.0px;top:50.5px;font-size:13.23px;line-height:19px;color:#6a6e73;letter-spacing:-1.05px;">Google で検索するか、URL を入力してください</div>
<div id="t2" class="abs nw" style="left:104.0px;top:92.0px;font-size:13.59px;line-height:20px;color:#1e1e1e;letter-spacing:-1.30px;">ストレージ&amp;スナッ…</div>
<div id="t3" class="abs nw" style="left:1082.5px;top:91.0px;font-size:14.52px;line-height:22px;color:#fff;font-weight:700;letter-spacing:-0.85px;">admin</div>
<div id="t4" class="abs nw" style="left:1124.6px;top:769.0px;font-size:10.50px;line-height:15px;color:#b5b5b5;letter-spacing:-0.13px;">2020/01/31 17:20:52</div>
<div id="t5" class="abs nw" style="left:89.0px;top:156.5px;font-size:12.46px;line-height:18px;color:#333;letter-spacing:-1.22px;">ストレージ&amp;スナップショット</div>
<div id="t6" class="abs nw" style="left:143.5px;top:192.0px;font-size:18.08px;line-height:26px;color:#222;font-weight:700;letter-spacing:-1.77px;">ストレージ&amp;スナップショット</div>
<div id="t7" class="abs nw" style="left:411.0px;top:195.5px;font-size:15.00px;line-height:21px;color:#444;letter-spacing:-0.90px;">外部 RAID デバイス</div>
<div id="t8" class="abs nw" style="left:605.0px;top:195.5px;font-size:15.00px;line-height:21px;color:#444;letter-spacing:-1.04px;">SSD オーバープロビジョン</div>
<div id="t9" class="abs nw" style="left:846.0px;top:195.5px;font-size:15.00px;line-height:21px;color:#444;letter-spacing:-0.61px;">Qtier</div>
<div id="t10" class="abs nw" style="left:946.0px;top:195.5px;font-size:15.00px;line-height:21px;color:#444;letter-spacing:-0.93px;">VJBOD/VJBOD クラウド</div>
<div id="t11" class="abs nw" style="left:127.8px;top:260.8px;font-size:14.50px;line-height:20px;color:#fff;font-weight:700;letter-spacing:-0.40px;">概要</div>
<div id="t12" class="abs nw" style="left:133.8px;top:293.8px;font-size:14.77px;line-height:21px;color:#fff;font-weight:500;letter-spacing:-1.47px;">ストレージ</div>
<div id="t13" class="abs nw" style="left:133.8px;top:323.3px;font-size:14.47px;line-height:21px;color:#fff;font-weight:500;letter-spacing:-1.44px;">スナップショット</div>
<div id="t14" class="abs nw" style="left:127.8px;top:354.8px;font-size:16.00px;line-height:23px;color:#fff;font-weight:700;letter-spacing:-1.60px;">ストレージ</div>
<div id="t15" class="abs nw" style="left:133.8px;top:389.6px;font-size:14.62px;line-height:21px;color:#fff;font-weight:500;letter-spacing:-1.43px;">ディスク</div>
<div id="t16" class="abs nw" style="left:185.0px;top:390.6px;font-size:13.50px;line-height:19px;color:#fff;font-weight:700;letter-spacing:-0.31px;">/VJBOD</div>
<div id="t17" class="abs nw" style="left:133.8px;top:419.1px;font-size:14.54px;line-height:21px;color:#fff;font-weight:500;letter-spacing:-1.17px;">ストレージ/スナップショ...</div>
<div id="t18" class="abs nw" style="left:133.8px;top:449.6px;font-size:14.63px;line-height:21px;color:#fff;font-weight:500;letter-spacing:-1.46px;">キャッシュ加速</div>
<div id="t19" class="abs nw" style="left:133.8px;top:479.6px;font-size:14.68px;line-height:21px;color:#fff;font-weight:500;letter-spacing:-1.46px;">外部ストレージ</div>
<div id="t20" class="abs nw" style="left:127.8px;top:510.8px;font-size:15.35px;line-height:23px;color:#fff;font-weight:700;letter-spacing:-1.25px;">スナップショットバ...</div>
<div id="t21" class="abs nw" style="left:133.8px;top:545.3px;font-size:14.55px;line-height:21px;color:#fff;font-weight:500;letter-spacing:-1.44px;">スナップショットレプリカ</div>
<div id="t22" class="abs nw" style="left:133.8px;top:575.7px;font-size:14.55px;line-height:21px;color:#fff;font-weight:500;letter-spacing:-1.44px;">スナップショットボールト</div>
<div id="t23" class="abs nw" style="left:127.8px;top:605.2px;font-size:15.03px;line-height:22px;color:#fff;font-weight:700;letter-spacing:-0.96px;">iSCSI &amp; ファイバーチャ...</div>
<div class="abs nw" style="left:324.0px;top:242.5px;font-size:16.87px;line-height:27px;color:#222;font-weight:500;letter-spacing:-1.67px;width:88px;overflow:hidden;"><span id="t24">ストレージ領域</span></div>
<div class="abs nw" style="left:335.3px;top:277.5px;font-size:14.00px;line-height:20px;color:#fff;font-weight:700;letter-spacing:-0.90px;width:76.7px;overflow:hidden;"><span id="t25">名前/エイリアス</span></div>
<div class="abs nw" style="left:352.3px;top:306.8px;font-size:15.10px;line-height:22px;color:#222;letter-spacing:-1.50px;width:59.7px;overflow:hidden;"><span id="t26">ストレージ</span></div>
<div id="t27" class="abs nw" style="left:470.5px;top:243.5px;font-size:17.00px;line-height:24px;color:#333;font-weight:700;letter-spacing:-1.34px;">グローバル設定</div>
<div id="t28" class="abs nw" style="left:434.0px;top:370.3px;font-size:13.39px;line-height:19px;color:#1a7ae0;font-weight:500;letter-spacing:-1.33px;">ストレージ</div>
<div id="t29" class="abs nw" style="left:437.0px;top:493.3px;font-size:13.50px;line-height:19px;color:#444;letter-spacing:-0.67px;">ディスク /</div>
<div id="t30" class="abs nw" style="left:441.7px;top:507.1px;font-size:12.95px;line-height:19px;color:#444;letter-spacing:-1.26px;">デバイス</div>
<div id="t31" class="abs nw" style="left:435.3px;top:623.1px;font-size:13.27px;line-height:19px;color:#444;letter-spacing:-1.32px;">スナップシ</div>
<div id="t32" class="abs nw" style="left:447.8px;top:637.1px;font-size:12.85px;line-height:19px;color:#444;letter-spacing:-1.28px;">ョット</div>
<div id="t33" class="abs nw" style="left:537.0px;top:312.7px;font-size:17.50px;line-height:24px;color:#404040;letter-spacing:-0.69px;">最適な RAID 性能と正常性を確実にするには、これらの設定を行ってください。</div>
<div id="t34" class="abs nw" style="left:548.8px;top:361.3px;font-size:14.50px;line-height:20px;color:#222;font-weight:500;letter-spacing:-0.51px;">RAID 再同期優先度 (リビルド、移行、スクラブ、同期)</div>
<div id="t35" class="abs nw" style="left:573.6px;top:393.5px;font-size:13.29px;line-height:20px;color:#333;letter-spacing:-1.17px;">ストレージプール 1</div>
<div id="t36" class="abs nw" style="left:578.7px;top:426.5px;font-size:11.89px;line-height:17px;color:#fff;font-weight:700;letter-spacing:-0.87px;">RAID グループ</div>
<div id="t37" class="abs nw" style="left:687.7px;top:426.5px;font-size:11.51px;line-height:17px;color:#fff;font-weight:700;letter-spacing:-0.82px;">RAID タイプ</div>
<div id="t38" class="abs nw" style="left:778.6px;top:426.5px;font-size:12.00px;line-height:17px;color:#fff;font-weight:700;letter-spacing:-0.92px;">ステータス</div>
<div id="t39" class="abs nw" style="left:883.0px;top:426.5px;font-size:12.00px;line-height:17px;color:#fff;font-weight:700;letter-spacing:-1.17px;">再同期の速度</div>
<div id="t40" class="abs nw" style="left:1012.5px;top:426.5px;font-size:11.96px;line-height:17px;color:#fff;font-weight:700;letter-spacing:-1.18px;">優先度</div>
<div id="t41" class="abs nw" style="left:577.0px;top:457.0px;font-size:11.95px;line-height:18px;color:#1a6bb8;letter-spacing:-0.80px;text-decoration:underline">RAID グループ 1</div>
<div id="t42" class="abs nw" style="left:687.0px;top:457.5px;font-size:10.82px;line-height:17px;color:#444;letter-spacing:-0.58px;">RAID 1</div>
<div id="t43" class="abs nw" style="left:801.8px;top:457.5px;font-size:11.75px;line-height:17px;color:#333;letter-spacing:-0.62px;">同期中 (9....</div>
<div id="t44" class="abs nw" style="left:883.0px;top:457.5px;font-size:12.00px;line-height:17px;color:#444;letter-spacing:-0.49px;">132.81 MB / s (03h ...</div>
<div id="t45" class="abs nw" style="left:1025.5px;top:456.5px;font-size:13.12px;line-height:19px;color:#222;letter-spacing:-0.96px;">既定 (中速度)</div>
<div id="t46" class="abs nw" style="left:563.0px;top:488.0px;font-size:13.00px;line-height:18px;color:#1d5f8f;letter-spacing:-1.14px;">注記:お使いのディスクの速度に応じて優先度設定が正し</div>
<div id="t47" class="abs nw" style="left:974.0px;top:488.0px;font-size:13.00px;line-height:18px;color:#1a6bb8;letter-spacing:-0.92px;text-decoration:underline">週ごとのディスク性能テスト</div>
<div id="t48" class="abs nw" style="left:1135.0px;top:488.0px;font-size:12.66px;line-height:18px;color:#1d5f8f;letter-spacing:-1.25px;">を有効にし</div>
<div id="t49" class="abs nw" style="left:563.0px;top:511.5px;font-size:12.47px;line-height:18px;color:#1d5f8f;letter-spacing:-1.24px;">てください。</div>
<div id="t50" class="abs nw" style="left:881.0px;top:494.0px;font-size:12.50px;line-height:18px;color:#333;letter-spacing:-0.68px;">同期中 (9.3%)</div>
<div id="t51" class="abs nw" style="left:548.4px;top:557.0px;font-size:14.50px;line-height:20px;color:#222;font-weight:500;letter-spacing:-0.64px;">RAID スクラビングのスケジュール</div>
<div id="t52" class="abs nw" style="left:573.7px;top:589.5px;font-size:12.50px;line-height:18px;color:#aaa;letter-spacing:-0.65px;">毎週</div>
<div id="t53" class="abs nw" style="left:688.0px;top:589.5px;font-size:12.21px;line-height:18px;color:#333;letter-spacing:-1.21px;">日</div>
<div id="t54" class="abs nw" style="left:716.0px;top:589.5px;font-size:12.50px;line-height:18px;color:#aaa;letter-spacing:-0.97px;">日曜日</div>
<div id="t55" class="abs nw" style="left:830.7px;top:589.5px;font-size:12.68px;line-height:18px;color:#333;letter-spacing:-0.96px;">時刻:</div>
<div id="t56" class="abs nw" style="left:874.0px;top:590.0px;font-size:11.98px;line-height:17px;color:#aaa;letter-spacing:-0.66px;">00</div>
<div id="t57" class="abs nw" style="left:936.5px;top:589.0px;font-size:9.96px;line-height:18px;color:#aaa;letter-spacing:-0.28px;">:</div>
<div id="t58" class="abs nw" style="left:955.0px;top:590.0px;font-size:12.00px;line-height:17px;color:#aaa;letter-spacing:-0.18px;">00</div>
<div id="t59" class="abs nw" style="left:1018.5px;top:589.5px;font-size:12.50px;line-height:18px;color:#333;letter-spacing:-0.30px;">( hh : mm )</div>
<div id="t60" class="abs nw" style="left:548.4px;top:640.0px;font-size:14.50px;line-height:20px;color:#222;font-weight:500;letter-spacing:-0.57px;">自動再利用と SSD トリムのスケジュール:</div>
<div id="t61" class="abs nw" style="left:573.7px;top:672.5px;font-size:12.50px;line-height:18px;color:#333;letter-spacing:-0.65px;">毎日</div>
<div id="t62" class="abs nw" style="left:688.0px;top:672.5px;font-size:12.68px;line-height:18px;color:#333;letter-spacing:-0.96px;">時刻:</div>
<div id="t63" class="abs nw" style="left:731.0px;top:673.0px;font-size:12.00px;line-height:17px;color:#333;letter-spacing:-0.18px;">02</div>
<div id="t64" class="abs nw" style="left:795.0px;top:672.0px;font-size:9.96px;line-height:18px;color:#333;letter-spacing:-0.28px;">:</div>
<div id="t65" class="abs nw" style="left:814.0px;top:673.0px;font-size:12.00px;line-height:17px;color:#333;letter-spacing:-0.18px;">00</div>
<div id="t66" class="abs nw" style="left:877.0px;top:672.5px;font-size:12.50px;line-height:18px;color:#333;letter-spacing:-0.31px;">( hh : mm )</div>
<div id="t67" class="abs nw" style="left:1078.0px;top:708.7px;font-size:14.50px;line-height:20px;color:#444;">適用</div>
<div id="t68" class="abs nw" style="left:1169.5px;top:708.7px;font-size:14.50px;line-height:20px;color:#444;letter-spacing:-0.17px;">閉じる</div>
</div>
<!-- mask for clipped last row under panel bottom -->
<div class="abs" style="left:519px;top:682px;width:718px;height:20px;background:#fff"></div>
<div class="abs" style="left:518px;top:681px;width:719px;height:1px;background:#b9b9b9"></div>

</body>
</html>
